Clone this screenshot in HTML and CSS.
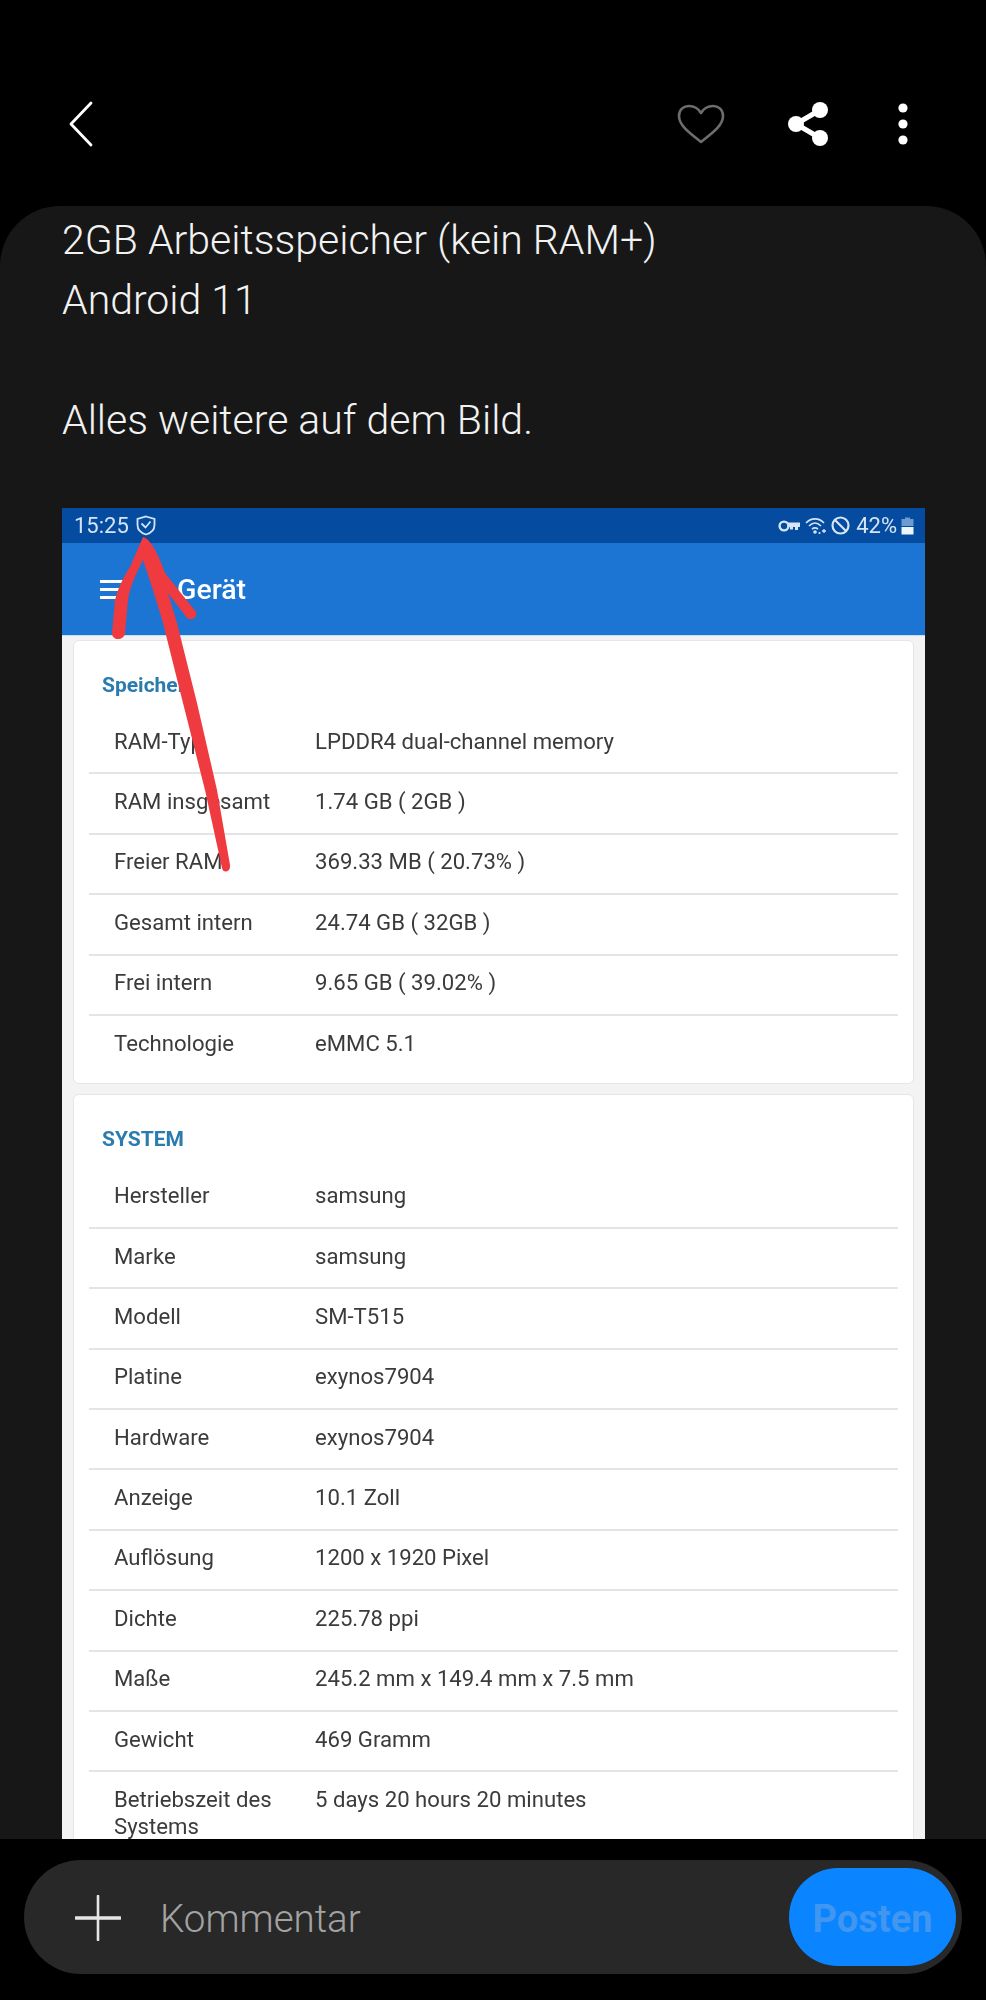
FILE: index.html
```html
<!DOCTYPE html>
<html lang="en">

<head>
    <meta charset="UTF-8">
    <meta name="viewport" content="width=device-width, initial-scale=1.0">
    <title>Kommentar</title>
    <link rel="stylesheet" href="styles.css">
</head>

<body>
    <header class="topbar">
        <svg class="icon-back" width="30" height="50" viewBox="0 0 30 50">
            <path d="M26 4 L6 25 L26 46" fill="none" stroke="#fff" stroke-width="2.8" stroke-linecap="round" stroke-linejoin="round" />
        </svg>
        <svg class="icon-heart" width="48" height="40" viewBox="0 0 48 40">
            <path d="M24 38 C14 30 2 22 2 12 C2 5 7 2 12 2 C17 2 21 4 24 9 C27 4 31 2 36 2 C41 2 46 5 46 12 C46 22 34 30 24 38 Z" fill="none" stroke="#6d6d6d" stroke-width="2.6" stroke-linejoin="round" />
        </svg>
        <svg class="icon-share" width="42" height="46" viewBox="0 0 42 46">
            <path d="M33 9 L9 23 L33 37" fill="none" stroke="#fff" stroke-width="5" />
            <circle cx="33" cy="9" r="8" fill="#fff" />
            <circle cx="9" cy="23" r="8" fill="#fff" />
            <circle cx="33" cy="37" r="8" fill="#fff" />
        </svg>
        <svg class="icon-more" width="12" height="44" viewBox="0 0 12 44">
            <circle cx="6" cy="6" r="4.6" fill="#fff" />
            <circle cx="6" cy="22" r="4.6" fill="#fff" />
            <circle cx="6" cy="38" r="4.6" fill="#fff" />
        </svg>
    </header>

    <main class="panel">
        <p class="post-text">2GB Arbeitsspeicher (kein RAM+)<br>Android 11<br><br>Alles weitere auf dem Bild.</p>

        <div class="shot">
            <div class="shot-status">
                <span class="shot-time">15:25</span>
                <svg width="20" height="21" viewBox="0 0 20 21">
                    <path d="M10 1.5 L18.5 4 V10 C18.5 14.5 15 18 10 19.5 C5 18 1.5 14.5 1.5 10 V4 Z" fill="none" stroke="#d5e4f6" stroke-width="1.8" />
                    <path d="M5.5 8.5 L9.5 12.5 L14.5 6.5" fill="none" stroke="#d5e4f6" stroke-width="1.8" />
                </svg>
                <span class="shot-status-right">
                    <svg width="22" height="14" viewBox="0 0 22 14">
                        <circle cx="6" cy="7" r="4.4" fill="none" stroke="#d5e4f6" stroke-width="2.4" />
                        <path d="M10 3.5 H22 V8 H20 V11 H17 V8 H15 V10.5 H12 V8 H10 Z" fill="#d5e4f6" />
                    </svg>
                    <svg width="21" height="18" viewBox="0 0 21 18">
                        <path d="M1 6 C6 0.5 14 0.5 19 6 M4 9 C8 5 12 5 16 9 M7 12 C9 10.5 11 10.5 13 12" fill="none" stroke="#d5e4f6" stroke-width="1.6" />
                        <circle cx="10" cy="15" r="1.8" fill="#d5e4f6" />
                        <circle cx="14.5" cy="16" r="1.1" fill="#d5e4f6" />
                        <path d="M17 14 H21 M19 12 V16" stroke="#d5e4f6" stroke-width="1.3" />
                    </svg>
                    <svg width="19" height="19" viewBox="0 0 19 19">
                        <circle cx="9.5" cy="9.5" r="8" fill="none" stroke="#d5e4f6" stroke-width="2.2" />
                        <path d="M4 4 L15 15" stroke="#d5e4f6" stroke-width="2.2" />
                    </svg>
                    <span class="shot-battery-text">42%</span>
                    <svg width="13" height="18" viewBox="0 0 13 18">
                        <path d="M4 0.5 H9 V2 H12.5 V9 H0.5 V2 H4 Z" fill="#6d9ad0" />
                        <rect x="0.5" y="10" width="12" height="7.5" fill="#eef4fb" />
                    </svg>
                </span>
            </div>
            <div class="shot-appbar">
                <span class="burger"><i></i><i></i><i></i></span>
                <span class="shot-title">Gerät</span>
            </div>

            <section class="card">
                <h2>Speicher</h2>
                <div class="row"><span>RAM-Typ</span><span>LPDDR4 dual-channel memory</span></div>
                <div class="row"><span>RAM insgesamt</span><span>1.74 GB ( 2GB )</span></div>
                <div class="row"><span>Freier RAM</span><span>369.33 MB ( 20.73% )</span></div>
                <div class="row"><span>Gesamt intern</span><span>24.74 GB ( 32GB )</span></div>
                <div class="row"><span>Frei intern</span><span>9.65 GB ( 39.02% )</span></div>
                <div class="row last"><span>Technologie</span><span>eMMC 5.1</span></div>
            </section>

            <section class="card">
                <h2>SYSTEM</h2>
                <div class="row"><span>Hersteller</span><span>samsung</span></div>
                <div class="row"><span>Marke</span><span>samsung</span></div>
                <div class="row"><span>Modell</span><span>SM-T515</span></div>
                <div class="row"><span>Platine</span><span>exynos7904</span></div>
                <div class="row"><span>Hardware</span><span>exynos7904</span></div>
                <div class="row"><span>Anzeige</span><span>10.1 Zoll</span></div>
                <div class="row"><span>Auflösung</span><span>1200 x 1920 Pixel</span></div>
                <div class="row"><span>Dichte</span><span>225.78 ppi</span></div>
                <div class="row"><span>Maße</span><span>245.2 mm x 149.4 mm x 7.5 mm</span></div>
                <div class="row"><span>Gewicht</span><span>469 Gramm</span></div>
                <div class="row last"><span>Betriebszeit des Systems</span><span>5 days 20 hours 20 minutes</span></div>
            </section>

            <!-- red arrow scribbled on top of the screenshot -->
            <svg class="scribble" width="140" height="350" viewBox="0 0 140 350">
                <path d="M48 7 C54 8 62 20 70 43 L101 82 C103 88 96 91 92 88 L73 63 L82 93 L102 173 L122 260 L135 335 C136 342 128 344 127 338 L110 260 L88 173 L68 93 L58 60 L48 30 C42 42 35 56 33 70 L30 103 C29 111 17 111 17 103 L20 70 C23 58 29 46 35 37 Z" fill="#ef3a3f" />
            </svg>
        </div>
    </main>

    <footer class="composer">
        <div class="pill">
            <svg class="icon-plus" width="46" height="46" viewBox="0 0 46 46">
                <path d="M23 1 V45" stroke="#e6e6e6" stroke-width="2.6" stroke-linecap="round" />
                <path d="M1 23 H45" stroke="#e6e6e6" stroke-width="3.4" stroke-linecap="round" />
            </svg>
            <span class="placeholder">Kommentar</span>
            <button class="post-btn">Posten</button>
        </div>
    </footer>
</body>

</html>
```

FILE: styles.css
```css
body {
    font-family: Roboto, "Liberation Sans", sans-serif;
    margin: 0;
    padding: 0;
    height: 2000px;
    overflow: hidden;
    background-color: #000;
}

.topbar {
    height: 206px;
    display: flex;
    align-items: flex-start;
    box-sizing: border-box;
    padding-top: 99px;
}

.icon-back {
    margin-left: 65px;
    margin-top: 0;
}

.icon-heart {
    margin-left: auto;
    margin-top: 5px;
}

.icon-share {
    margin-left: 62px;
    margin-top: 2px;
}

.icon-more {
    margin-left: 68px;
    margin-right: 77px;
    margin-top: 3px;
}

.panel {
    height: 1633px;
    overflow: hidden;
    background-color: #171717;
    border-radius: 60px 60px 0 0;
    padding: 4px 61px 0 62px;
    box-sizing: border-box;
}

.post-text {
    margin: 0 0 58px;
    color: #f2f2f2;
    font-size: 41px;
    font-weight: 300;
    line-height: 60px;
}

.shot {
    position: relative;
    background-color: #f3f3f3;
    filter: blur(0.4px);
}

.shot-status {
    height: 35px;
    display: flex;
    align-items: center;
    gap: 7px;
    padding: 0 11px 0 12px;
    background-color: #054b9f;
    color: #d5e4f6;
    font-size: 22px;
}

.shot-status-right {
    margin-left: auto;
    display: flex;
    align-items: center;
    gap: 5px;
}

.shot-battery-text {
    margin-left: 1px;
    margin-right: -1px;
}

.shot-appbar {
    height: 92px;
    display: flex;
    align-items: center;
    background-color: #1c74d3;
    border-bottom: 1px solid #bfe2f7;
    color: #fff;
}

.burger {
    display: flex;
    flex-direction: column;
    gap: 5px;
    width: 25px;
    margin-left: 38px;
}

.burger i {
    display: block;
    height: 3px;
    background-color: #fff;
}

.shot-title {
    margin-left: 52px;
    font-size: 28.5px;
    font-weight: 500;
}

.card {
    margin: 4px 11px 10.5px;
    padding: 0 15px;
    background: #fff;
    border: 1px solid #e6e6e6;
    border-radius: 6px;
}

.card h2 {
    margin: 0;
    height: 73px;
    padding: 29px 0 0 13px;
    box-sizing: border-box;
    color: #2b7cae;
    font-size: 21px;
    font-weight: 700;
    line-height: 30px;
}

.row {
    display: grid;
    grid-template-columns: 201px 1fr;
    padding: 0 25px 4px;
    height: 60.4px;
    box-sizing: border-box;
    border-bottom: 2px solid #e4e4e4;
    align-items: center;
    color: #3b3b3b;
    font-size: 22.15px;
    line-height: 27px;
}

.row.last {
    border-bottom: none;
    align-items: start;
    padding-top: 14px;
    height: auto;
    padding-bottom: 26px;
}

.scribble {
    position: absolute;
    left: 33px;
    top: 22px;
}

.composer {
    height: 161px;
    box-sizing: border-box;
    padding: 21px 24px 0;
}

.pill {
    height: 114px;
    display: flex;
    align-items: center;
    background-color: #282828;
    border-radius: 57px;
    padding-right: 6px;
}

.icon-plus {
    margin-left: 51px;
    margin-top: 2px;
}

.placeholder {
    margin-left: 39px;
    margin-top: 2px;
    color: #a3a3a3;
    font-size: 38.5px;
    font-weight: 300;
}

.post-btn {
    margin-left: auto;
    width: 167px;
    height: 98px;
    border: none;
    border-radius: 49px;
    background-color: #0a84ff;
    color: #4196f0;
    font-family: inherit;
    font-size: 38px;
    font-weight: 700;
    padding: 3px 0 0;
}
```
